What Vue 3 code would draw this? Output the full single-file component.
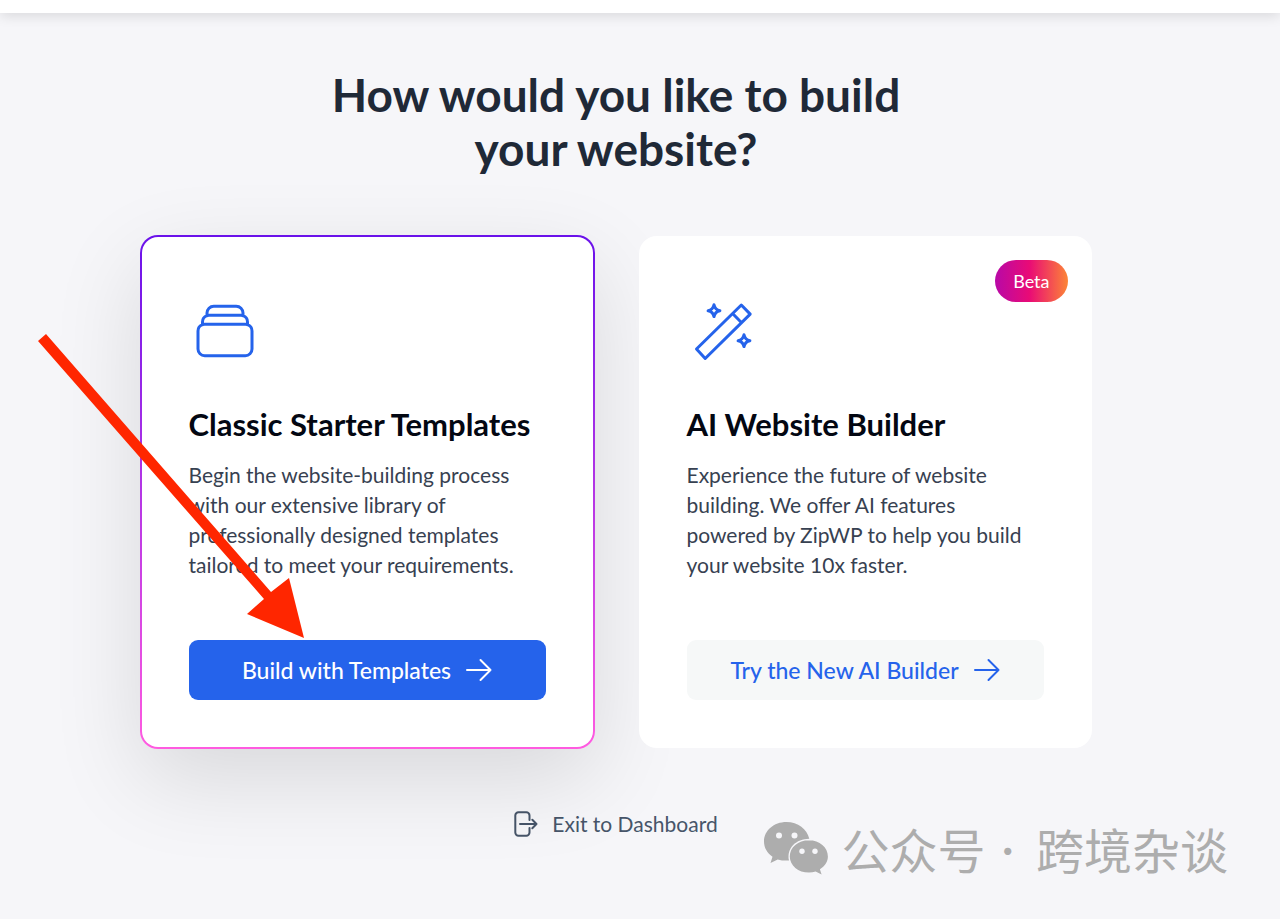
<template>
  <div class="page">
    <header class="topbar"></header>

    <main class="content">
      <h1 class="title">How would you like to build your website?</h1>

      <div class="cards">
        <section v-for="card in cards" :key="card.id" class="card" :class="{ active: card.active }">
          <span v-if="card.badge" class="badge">{{ card.badge }}</span>

          <svg v-if="card.id === 'classic'" class="card-icon" viewBox="0 0 24 24" aria-hidden="true">
            <path
              d="M6 6.878V6a2.25 2.25 0 0 1 2.25-2.25h7.5A2.25 2.25 0 0 1 18 6v.878m-12 0c.235-.083.487-.128.75-.128h10.5c.263 0 .515.045.75.128m-12 0A2.25 2.25 0 0 0 4.5 9v.878m13.5-3A2.25 2.25 0 0 1 19.5 9v.878m0 0a2.246 2.246 0 0 0-.75-.128H5.25c-.263 0-.515.045-.75.128m15 0A2.25 2.25 0 0 1 21 12v6a2.25 2.25 0 0 1-2.25 2.25H5.25A2.25 2.25 0 0 1 3 18v-6c0-.98.626-1.813 1.5-2.122"
            />
          </svg>
          <svg v-else class="card-icon wand" viewBox="0 0 72 72" aria-hidden="true">
            <path d="M9.5 54 54.3 10 63.2 19.1 18.2 63.5ZM45.6 18.5 54.6 27.7" />
            <path d="M27 9.8Q28 14.7 32.9 15.7 28 16.7 27 21.6 26 16.7 21.1 15.7 26 14.7 27 9.8Z" />
            <path d="M57 39.8Q58 44.7 62.9 45.7 58 46.7 57 51.6 56 46.7 51.1 45.7 56 44.7 57 39.8Z" />
          </svg>

          <h2 class="card-title">{{ card.title }}</h2>
          <p class="card-text">{{ card.text }}</p>
          <button type="button" class="btn" :class="{ primary: card.active }">
            {{ card.action }}
            <svg class="btn-arrow" viewBox="0 0 26 24" aria-hidden="true">
              <path d="M1 12H24.5M14.5 2 24.5 12 14.5 22" />
            </svg>
          </button>
        </section>
      </div>

      <a href="#" class="exit">
        <svg class="exit-icon" viewBox="0 0 24 26" aria-hidden="true">
          <path d="M15.5 9V4.5a3.2 3.2 0 0 0-3.2-3.2H4.5a3.2 3.2 0 0 0-3.2 3.2v17a3.2 3.2 0 0 0 3.2 3.2h7.8a3.2 3.2 0 0 0 3.2-3.2V17M6 13H22.5M18.3 8.8 22.5 13 18.3 17.2" />
        </svg>
        Exit to Dashboard
      </a>
    </main>

    <svg class="pointer" viewBox="0 0 268 306" aria-hidden="true">
      <path d="M0 9 8 2 233 260 251 246 266 306 209 282 226 267Z" />
    </svg>

    <div class="watermark">
      <svg class="wechat" viewBox="0 0 66 54" aria-hidden="true">
        <path d="M23.500 1C10.800 1 1 9.600 1 20.500c0 6.300 3.200 11.600 8.500 15.200L7.500 42l7.200-3.600c3.600 1 7.300 1.400 11.300 1.100C23.500 27 33 18 46.300 17.800 44 8 35 1 23.500 1Z" />
        <path d="M46 19.200c-10.800 0-19.200 7.200-19.200 16.200S35.200 51.600 46 51.600c2.300 0 4.600-.4 6.600-1.100l6 3-1.700-5.300c4.900-3 8-7.500 8-12.800 0-9-8.400-16.200-18.900-16.200Z" />
        <g class="eyes">
          <circle cx="16" cy="14.500" r="3" />
          <circle cx="31.500" cy="14.500" r="3" />
          <circle cx="39" cy="30.200" r="2.700" />
          <circle cx="52" cy="30.200" r="2.700" />
        </g>
      </svg>
      <span>公众号</span>
      <span class="dot">·</span>
      <span>跨境杂谈</span>
    </div>
  </div>
</template>

<script setup>
const cards = [
  {
    id: 'classic',
    title: 'Classic Starter Templates',
    text: 'Begin the website-building process with our extensive library of professionally designed templates tailored to meet your requirements.',
    action: 'Build with Templates',
    active: true
  },
  {
    id: 'ai',
    title: 'AI Website Builder',
    text: 'Experience the future of website building. We offer AI features powered by ZipWP to help you build your website 10x faster.',
    action: 'Try the New AI Builder',
    badge: 'Beta',
    active: false
  }
]
</script>

<style>
body {
  margin: 0;
  background: #f6f6f9;
}
</style>

<style scoped>
.page {
  position: relative;
  min-height: 100vh;
  overflow: hidden;
  background: #f6f6f9;
  font-family: Lato, 'Liberation Sans', sans-serif;
}

.topbar {
  height: 13px;
  background: #fff;
  box-shadow: 0 2px 14px rgba(0, 0, 0, 0.14);
}

.content {
  display: flex;
  flex-direction: column;
  align-items: center;
  padding: 55px 48px 80px 0;
}

.title {
  max-width: 640px;
  margin: 0 0 60px;
  font-size: 46px;
  font-weight: 700;
  line-height: 54px;
  text-align: center;
  color: #1f2937;
}

.cards {
  display: grid;
  grid-template-columns: 1fr 1fr;
  gap: 45px;
  width: 100%;
  max-width: 951px;
}

.card {
  position: relative;
  display: flex;
  flex-direction: column;
  align-items: flex-start;
  padding: 59px 48px 48px;
  border-radius: 18px;
  background: #fff;
}

.card.active {
  margin: -1px;
  padding: 58px 47px 47px;
  border: 2px solid transparent;
  background:
    linear-gradient(#fff, #fff) padding-box,
    linear-gradient(180deg, #6a11ea, #ff5be0) border-box;
  box-shadow: 0 30px 90px rgba(0, 0, 0, 0.12);
}

.card-icon {
  width: 72px;
  height: 72px;
  fill: none;
  stroke: #2563eb;
  stroke-width: 1;
  stroke-linecap: round;
  stroke-linejoin: round;
}

.card-icon.wand {
  stroke-width: 3;
}

.card-title {
  margin: 39px 0 18px;
  font-size: 31px;
  font-weight: 700;
  line-height: 36px;
  color: #030712;
}

.card-text {
  max-width: 350px;
  margin: 0 0 60px;
  font-size: 21px;
  line-height: 30px;
  color: #374151;
}

.btn {
  display: flex;
  align-items: center;
  justify-content: center;
  gap: 15px;
  width: 100%;
  height: 60px;
  margin-top: auto;
  padding: 0;
  border: 0;
  border-radius: 9px;
  background: #f6f8f8;
  font-family: inherit;
  font-size: 23px;
  font-weight: 500;
  color: #2563eb;
  cursor: pointer;
}

.btn.primary {
  background: #2563eb;
  color: #fff;
}

.btn-arrow {
  width: 26px;
  height: 24px;
  fill: none;
  stroke: currentColor;
  stroke-width: 2;
  stroke-linecap: round;
  stroke-linejoin: round;
}

.badge {
  position: absolute;
  top: 24px;
  right: 24px;
  padding: 0 18px;
  border-radius: 21px;
  background: linear-gradient(90deg, #b809a7 0%, #e90b76 47%, #fc8536 100%);
  font-size: 18px;
  line-height: 42px;
  color: #fff;
}

.exit {
  display: flex;
  align-items: center;
  gap: 14px;
  margin-top: 61px;
  font-size: 21px;
  line-height: 30px;
  color: #475569;
  text-decoration: none;
}

.exit-icon {
  width: 24px;
  height: 26px;
  fill: none;
  stroke: currentColor;
  stroke-width: 2;
  stroke-linecap: round;
  stroke-linejoin: round;
}

/* hand-drawn marker pointing at the primary button */
.pointer {
  position: absolute;
  top: 332px;
  left: 38px;
  width: 268px;
  height: 306px;
  fill: #ff2600;
  pointer-events: none;
}

.watermark {
  position: absolute;
  right: 52px;
  bottom: 35px;
  display: flex;
  align-items: center;
  font-family: 'Noto Sans CJK SC', sans-serif;
  font-size: 48px;
  line-height: 72px;
  white-space: nowrap;
  color: #adadad;
}

.watermark .dot {
  margin: 0 22px 0 16px;
  font-family: Lato, sans-serif;
}

.wechat {
  width: 66px;
  height: 54px;
  margin-right: 12px;
  fill: currentColor;
}

.wechat .eyes {
  fill: #f6f6f9;
}
</style>
